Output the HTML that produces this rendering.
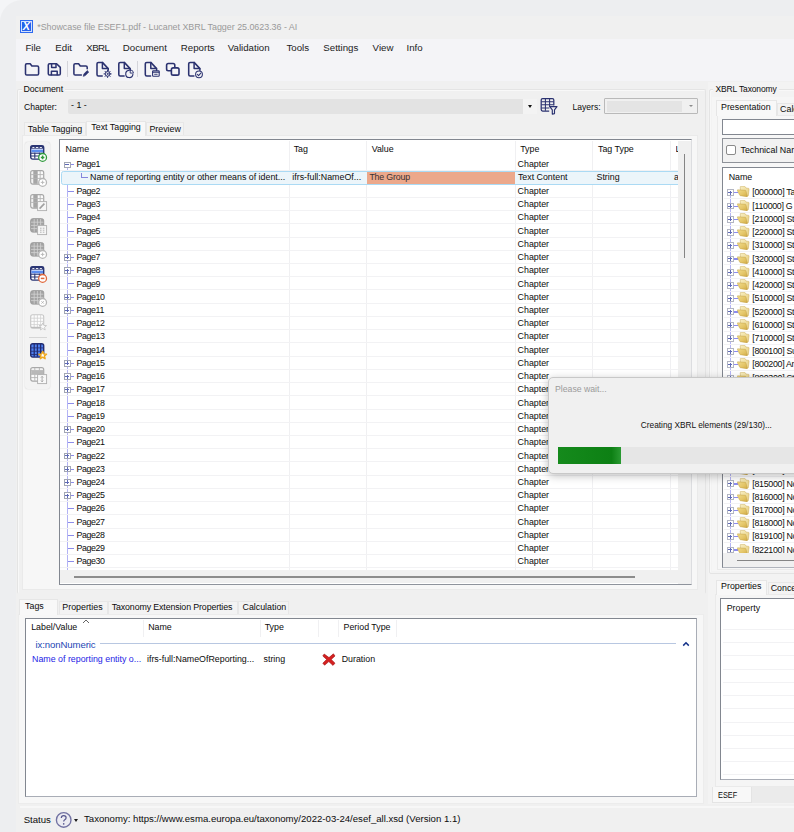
<!DOCTYPE html>
<html lang="en">
<head>
<meta charset="utf-8">
<title>Lucanet XBRL Tagger</title>
<style>
*{box-sizing:border-box;margin:0;padding:0}
html,body{width:794px;height:832px;overflow:hidden}
body{background:#f4f5f7;font-family:"Liberation Sans",sans-serif;font-size:8.85px;color:#0c0c0c;position:relative}
i{font-style:normal;display:block;position:absolute}
.abs{position:absolute}
#frame{position:absolute;left:0;top:0;width:900px;height:900px;background:#edeef0;border-top-left-radius:22px}
#win{position:absolute;left:16px;top:16px;width:800px;height:830px;background:#f0f0f0}
#title{position:absolute;left:0;top:0;width:100%;height:22.5px;background:#f0f0f0}
#title span{position:absolute;left:21.2px;top:5.8px;font-size:8.93px;color:#9a9a9a;white-space:nowrap;letter-spacing:-0.03px}
#appicon{position:absolute;left:3.9px;top:3.9px;width:13.1px;height:13.1px;background:#2563eb;border:1px solid #2d6af0;box-shadow:inset 0 0 0 1px rgba(255,255,255,.8);color:#fff;font-size:10.8px;font-style:italic;font-weight:bold;line-height:11.4px;text-align:center}
#menu{position:absolute;left:0;top:22.5px;width:100%;height:42.8px;background:#f4f4f7}
#menu span{position:absolute;top:3.5px;font-size:9.7px;color:#222;white-space:nowrap}
.tb{position:absolute;top:46px;height:14px}
.tsep{position:absolute;top:45px;width:1px;height:16px;background:#d4d4da}
.lbl{position:absolute;white-space:nowrap;line-height:11px}
.gb{position:absolute;border:1px solid #e4e4e4;border-radius:2px;box-shadow:inset 1px 1px 0 #f8f8f8}
.tab{position:absolute;background:#f3f3f3;border:1px solid #e7e7e7;border-bottom:none;white-space:nowrap;line-height:11px}
.tab.on{background:#f8f8f8;border-color:#e6e6e6}
.page{position:absolute;background:#f7f7f7;border:1px solid #eaeaea}
/* main grid */
#grid{position:absolute;left:59px;top:139.3px;width:632.9px;height:445.9px;background:#fff;border:1px solid #828790;border-right-color:#dcdde0;border-bottom-color:#8e939c;overflow:hidden}
.row{position:absolute;left:60px;width:618px;height:13.23px;border-bottom:1px solid #f2f2f4}
.row .c,.hdr{position:absolute;top:1.3px;white-space:nowrap;line-height:11px}
.row.sel{background:#ecf5fa;border:1px solid #abdaf4;border-radius:2.5px;left:60.5px;width:626px;height:13.7px;margin-top:-0.4px}
.row.sel .c{top:0.4px}
.pg{letter-spacing:-0.42px}
.val{position:absolute;left:305.6px;top:0.1px;width:148.3px;height:12px;background:#eca88b;display:block}
.vline{position:absolute;width:1px;background:#f0f0f2}
.box{left:4px;top:3.4px;width:6.6px;height:6.6px;border:1px solid #a2a6b4;background:#fff}
.box:before{content:"";position:absolute;left:0.3px;top:1.8px;width:4px;height:1px;background:#5f6ab6}
.box.plus:after{content:"";position:absolute;left:1.8px;top:0.3px;width:1px;height:4px;background:#5f6ab6}
.dash{left:7.5px;top:6.2px;width:6.5px;height:1px;background:#8d8dea}
.dash.d2{left:10.5px;width:3.5px}
.ell{left:19.3px;top:0.6px;width:7px;height:5px;border-left:1px solid #8585dc;border-bottom:1px solid #8585dc}
/* tax tree */
.trow{position:absolute;left:723.6px;width:80px;height:13.23px;border-bottom:1px solid #f2f2f4}
.trow span{position:absolute;left:28.7px;top:1.4px;white-space:nowrap;line-height:11px;letter-spacing:-0.3px}
.tbox{left:3.4px;top:3.3px;width:6.8px;height:6.8px;border:1px solid #b2b5c2;background:#fff}
.tbox:before{content:"";position:absolute;left:0.4px;top:1.9px;width:4px;height:1px;background:#5f6ab6}
.tbox:after{content:"";position:absolute;left:1.9px;top:0.4px;width:1px;height:4px;background:#5f6ab6}
.tdash{left:10.2px;top:6.2px;width:4px;height:1.2px;background:#8c8cf0}
.fold{position:absolute;left:13.8px;top:0.4px;width:12.4px;height:11px}
.pline{left:722.5px;width:80px;height:1px;background:#f2f2f4}
.ico{position:absolute;left:29.5px;width:20px;height:20px;overflow:visible}
</style>
</head>
<body>
<svg width="0" height="0" style="position:absolute">
<defs>
<g id="folder">
<path d="M3.2 0.9 Q3.3 0.4 3.9 0.4 L7.4 0.3 Q7.9 0.3 8.2 0.8 L9 2 L11.6 2.4 Q12.2 2.5 12.1 3.1 L11.3 9.8 L9.8 10.3 L3.6 6 Z" fill="url(#fgb)" stroke="#c4a24a" stroke-width="0.45"/>
<path d="M0.3 4.4 Q0.1 3.8 0.8 3.8 L8.2 4.3 Q8.8 4.4 8.9 4.9 L10.3 10.2 Q10.4 10.8 9.8 10.7 L3.4 9.7 Q2.9 9.6 2.7 9.1 Z" fill="url(#fgf)" stroke="#bf9a3c" stroke-width="0.45"/>
</g>
<linearGradient id="fgb" x1="0" y1="0" x2="1" y2="1"><stop offset="0" stop-color="#f8efc4"/><stop offset="1" stop-color="#e6cd7c"/></linearGradient>
<linearGradient id="fgf" x1="0" y1="0" x2="1" y2="1"><stop offset="0" stop-color="#f1dc8c"/><stop offset="0.6" stop-color="#e3c466"/><stop offset="1" stop-color="#cfa944"/></linearGradient>
<g id="tblnavy">
<rect x="0.7" y="0.7" width="13" height="13.4" rx="2" fill="#fff" stroke="#2b3674" stroke-width="1.4"/>
<rect x="0.7" y="0.7" width="13" height="3" fill="#2b3674"/>
<rect x="1.4" y="4.6" width="11.6" height="2.8" fill="#5b8def"/>
<path d="M1 8.2H13.4M1 11H13.4M4.8 7.6V13.6M9.4 7.6V13.6" stroke="#2b3674" stroke-width="1.1" fill="none"/>
<path d="M2.4 2.5H4.4M5.9 2.5H8.3M9.8 2.5H11.9" stroke="#fff" stroke-width="0.9"/>
</g>
<g id="tblgray">
<rect x="0.7" y="0.7" width="13" height="13.4" rx="2" fill="#a3a3a3" stroke="#9a9a9a" stroke-width="1"/>
<path d="M1 4.2H13.4M1 7.4H13.4M1 10.6H13.4M4.2 1V13.8M7.4 1V13.8M10.6 1V13.8" stroke="#d2d2d2" stroke-width="0.8" fill="none"/>
</g>
<g id="tblcol">
<rect x="0.7" y="0.7" width="13" height="13.4" rx="2" fill="#fafafa" stroke="#a8a8a8" stroke-width="1.2"/>
<rect x="3.6" y="1" width="3.6" height="12.8" fill="#a6a6a6"/>
<path d="M1 4.6H13.4M1 8.4H13.4M10.2 1V13.8M3.4 1V13.8M7.4 1V13.8" stroke="#b4b4b4" stroke-width="0.9" fill="none"/>
</g>
<g id="tbllight">
<rect x="0.7" y="0.7" width="13" height="13.4" rx="2" fill="#fdfdfd" stroke="#c6c6c6" stroke-width="1.1"/>
<path d="M1 4.2H13.4M1 7.4H13.4M1 10.6H13.4M4.2 1V13.8M7.4 1V13.8M10.6 1V13.8" stroke="#d0d0d0" stroke-width="0.8" fill="none"/>
<path d="M1 13.4H13.4" stroke="#bdbdbd" stroke-width="1.2"/>
</g>
<g id="tblblue">
<rect x="0.7" y="0.7" width="13" height="13.4" rx="2" fill="#4f80f0" stroke="#232c70" stroke-width="1.4"/>
<path d="M4.2 1V13.8M7.4 1V13.8M10.6 1V13.8" stroke="#232c70" stroke-width="1.3" fill="none"/><path d="M1 4.9H13.4M1 8.3H13.4M1 11.5H13.4" stroke="#232c70" stroke-width="0.8" fill="none"/>
</g>
<g id="tblrows">
<rect x="0.7" y="0.7" width="13" height="13.4" rx="2" fill="#fafafa" stroke="#a8a8a8" stroke-width="1.2"/>
<rect x="1.2" y="3.6" width="12" height="3.6" fill="#b8b8b8"/>
<path d="M1 3.4H13.4M1 7.4H13.4M1 10.6H13.4M4.8 7.4V13.8M9.4 7.4V13.8M4.8 1V3.2M9.4 1V3.2" stroke="#b4b4b4" stroke-width="0.9" fill="none"/>
</g>
</defs>
</svg>
<div id="frame"></div>
<div id="win">
  <div id="title"><div id="appicon">X</div><span>*Showcase file ESEF1.pdf - Lucanet XBRL Tagger 25.0623.36 - AI</span></div>
  <div id="menu">
    <span style="left:9.4px">File</span><span style="left:39.3px">Edit</span><span style="left:70.3px;letter-spacing:-0.55px">XBRL</span><span style="left:106.8px">Document</span><span style="left:164.8px">Reports</span><span style="left:211.8px">Validation</span><span style="left:270.5px">Tools</span><span style="left:307.3px">Settings</span><span style="left:356.6px">View</span><span style="left:390.5px">Info</span>
  </div>
</div>
<!-- toolbar icons (abs coords) -->
<svg class="abs" style="left:0;top:0" width="260" height="90" viewBox="0 0 260 90" fill="none" stroke="#2b3270" stroke-width="1.55" stroke-linejoin="round" stroke-linecap="round">
<path d="M25.5 64.9 Q25.5 63.7 26.7 63.7 H30.2 L31.9 66 H37.3 Q38.6 66 38.6 67.3 V73.7 Q38.6 75 37.3 75 H26.8 Q25.5 75 25.5 73.7 Z"/>
<path d="M48.3 65 Q48.3 63.7 49.6 63.7 H56.6 L60.3 67.4 V73.7 Q60.3 75 59 75 H49.6 Q48.3 75 48.3 73.7 Z"/>
<path d="M51.6 64 V67.5 H56 V64 M51.4 74.8 V71.2 H57.2 V74.8" stroke-width="1.5"/>
<path d="M81.4 75 H75.2 Q73.9 75 73.9 73.7 V65 Q73.9 63.7 75.2 63.7 H78.6 L80.3 66 H85.9 Q87.2 66 87.2 67.3 V68.8"/>
<path d="M83.4 76 L83.9 74 L87.2 70.6 L88.7 72 L85.4 75.4 Z" fill="#2b3270" stroke-width="0.7"/>
<path d="M102.2 76.0 H98.4 Q97.0 76.0 97.0 74.6 V63.8 Q97.0 62.4 98.4 62.4 H102.4 L108.2 68.6 V70.2"/><path d="M102.4 62.6 V68.6 H108.0" stroke-width="1.5"/>
<circle cx="107.6" cy="73.9" r="2.4" stroke-width="1"/><circle cx="107.6" cy="73.9" r="0.7" fill="#2b3270" stroke-width="0.5"/>
<path d="M107.6 70.3V71.2M107.6 76.6V77.5M104 73.9H104.9M110.3 73.9H111.2M105.1 71.4L105.7 72M109.5 75.8L110.1 76.4M105.1 76.4L105.7 75.8M109.5 72L110.1 71.4" stroke-width="1"/>
<path d="M124.1 76.0 H120.2 Q118.8 76.0 118.8 74.6 V63.8 Q118.8 62.4 120.2 62.4 H124.3 L130.1 68.6 V70.2"/><path d="M124.3 62.6 V68.6 H129.9" stroke-width="1.5"/>
<path d="M128.9 70.4 A3.6 3.6 0 1 0 132.9 74.4" stroke-width="1.1"/><path d="M130.2 69.8 V73.1 H133.5 A3.4 3.4 0 0 0 130.2 69.8Z" stroke-width="0.9"/>
<path d="M150.6 76.0 H146.8 Q145.3 76.0 145.3 74.6 V63.8 Q145.3 62.4 146.8 62.4 H150.8 L156.6 68.6 V70.2"/><path d="M150.8 62.6 V68.6 H156.4" stroke-width="1.5"/>
<rect x="152.6" y="70.7" width="6.6" height="5.6" rx="0.8" stroke-width="1.1"/><path d="M152.8 72.2H159" stroke-width="1.3"/><path d="M154.6 74.3H157.2" stroke-width="0.9"/>
<rect x="166.6" y="63.5" width="8.2" height="7.2" rx="1.7" stroke-width="1.6"/>
<rect x="171.4" y="67.9" width="7.6" height="7.2" rx="1.7" stroke-width="1.6" fill="#f4f4f7"/>
<path d="M193.9 76.0 H190.1 Q188.7 76.0 188.7 74.6 V63.8 Q188.7 62.4 190.1 62.4 H194.1 L199.9 68.6 V70.2"/><path d="M194.1 62.6 V68.6 H199.7" stroke-width="1.5"/>
<circle cx="199" cy="74.3" r="3.4" stroke-width="1.05"/><path d="M197.3 74.4 L198.6 75.6 L200.8 73.1" stroke-width="1.05"/>
</svg>
<i class="tsep" style="left:67.1px;top:61.3px"></i><i class="tsep" style="left:137.2px;top:61.3px"></i>

<!-- Document groupbox -->
<div class="gb" style="left:16.5px;top:89.3px;width:689px;height:505px;border-bottom-color:transparent"></div>
<span class="lbl" style="left:21.5px;top:83.5px;background:#f0f0f0;padding:0 2px;letter-spacing:-0.1px">Document</span>
<span class="lbl" style="left:24px;top:101.7px;font-size:8.6px">Chapter:</span>
<div class="abs" style="left:67.7px;top:98.7px;width:469.6px;height:15.2px;background:#e3e3e3;border-radius:2px"></div>
<div class="abs" style="left:522.7px;top:98.7px;width:14.6px;height:15.2px;background:#f3f3f3"></div>
<i style="left:528.3px;top:104.8px;border:2.4px solid transparent;border-top:3px solid #111;width:0;height:0"></i>
<span class="lbl" style="left:71px;top:99.5px">- 1 -</span>
<!-- filter icon -->
<svg class="abs" style="left:539.4px;top:96.2px" width="20" height="20" viewBox="0 0 20 20" fill="none" stroke="#2b3270" stroke-width="1.25" stroke-linejoin="round">
  <path d="M10.2 15 H3.6 Q2.2 15 2.2 13.6 V4 Q2.2 2.6 3.6 2.6 H13.4 Q14.8 2.6 14.8 4 V9.6"/>
  <path d="M2.4 5.7H14.6M2.4 8.8H14.6M2.4 11.9H10.4M6.4 2.8V14.8M10.6 2.8V11" stroke-width="1.05"/>
  <path d="M10.8 10.6 H18 L15.5 13.8 V17.6 L13.3 18.2 V13.8 Z" fill="#f0f0f0" stroke-width="1.15"/>
</svg>
<span class="lbl" style="left:572.5px;top:102.1px;font-size:8.55px">Layers:</span>
<div class="abs" style="left:604.2px;top:98.2px;width:94px;height:16.2px;border:1px solid #b9b9b9;background:#f0f0f0;border-radius:1px"></div>
<div class="abs" style="left:606.5px;top:100.5px;width:75.2px;height:11.6px;background:#e4e4e4"></div>
<i style="left:688.6px;top:105.2px;border:2.4px solid transparent;border-top:2.6px solid #8c8c8c;width:0;height:0"></i>

<!-- tabs -->
<div class="page" style="left:22.2px;top:135.3px;width:675.8px;height:455px"></div>
<div class="tab" style="left:24px;top:121.9px;width:61.5px;height:13.6px;padding:1.1px 0 0 2.8px">Table Tagging</div>
<div class="tab" style="left:146px;top:121.9px;width:37.5px;height:13.6px;padding:1.1px 0 0 2.4px">Preview</div>
<div class="tab on" style="left:85.5px;top:120.7px;width:60.5px;height:15.6px;padding:0.3px 0 0 4.8px">Text Tagging</div>

<!-- side tool panel -->
<div class="abs" style="left:24.6px;top:142.4px;width:25px;height:246.4px;background:#f3f3f3;border-radius:3px;box-shadow:0 0 1.5px rgba(0,0,0,.18)"></div>
<svg class="ico" style="top:145.2px" viewBox="0 0 20 20"><use href="#tblnavy"/><circle cx="12.6" cy="12.4" r="3.9" fill="#fff" stroke="#2f9a3c" stroke-width="1.3"/><path d="M12.6 10.6V14.2M10.8 12.4H14.4" stroke="#2f9a3c" stroke-width="1.5"/></svg>
<svg class="ico" style="top:169.9px" viewBox="0 0 20 20"><use href="#tblcol"/><circle cx="12.6" cy="12.4" r="3.9" fill="#fff" stroke="#b5b5b5" stroke-width="1.3"/><path d="M12.6 10.6V14.2M10.8 12.4H14.4" stroke="#b5b5b5" stroke-width="0.9"/></svg>
<svg class="ico" style="top:193.9px" viewBox="0 0 20 20"><use href="#tblcol"/><rect x="7.6" y="7.6" width="9" height="9" fill="#f6f6f6" stroke="#b0b0b0" stroke-width="0.9"/><path d="M9.6 14.6 L14.4 9.6" stroke="#a0a0a0" stroke-width="1.6"/></svg>
<svg class="ico" style="top:218.2px" viewBox="0 0 20 20"><use href="#tblgray"/><rect x="7.6" y="7.6" width="9" height="9" fill="#f6f6f6" stroke="#b0b0b0" stroke-width="0.9"/><path d="M10 10.2H11.6M12.8 10.2H14.4M10 12.2H11.6M12.8 12.2H14.4M10 14.2H11.6M12.8 14.2H14.4" stroke="#b4b4b4" stroke-width="1"/></svg>
<svg class="ico" style="top:241.9px" viewBox="0 0 20 20"><use href="#tblgray"/><circle cx="12.6" cy="12.4" r="3.9" fill="#fff" stroke="#b5b5b5" stroke-width="1.3"/><path d="M12.6 10.6V14.2M10.8 12.4H14.4" stroke="#b5b5b5" stroke-width="0.9"/></svg>
<svg class="ico" style="top:265.9px" viewBox="0 0 20 20"><use href="#tblnavy"/><circle cx="12.6" cy="12.4" r="3.9" fill="#fff" stroke="#e0673a" stroke-width="1.3"/><path d="M10.8 12.4H14.4" stroke="#e0673a" stroke-width="1.5"/></svg>
<svg class="ico" style="top:290.2px" viewBox="0 0 20 20"><use href="#tblgray"/><circle cx="12.6" cy="12.4" r="3.9" fill="#fff" stroke="#b5b5b5" stroke-width="1.3"/><path d="M11.4 11.2L13.8 13.6M13.8 11.2L11.4 13.6" stroke="#b5b5b5" stroke-width="0.9"/></svg>
<svg class="ico" style="top:314.2px" viewBox="0 0 20 20"><use href="#tbllight"/><path transform="translate(12.8 12.6) scale(0.85) translate(-12.6 -12.4)" d="M12.6 8 L13.9 11 L17 11.2 L14.6 13.2 L15.4 16.4 L12.6 14.6 L9.8 16.4 L10.6 13.2 L8.2 11.2 L11.3 11 Z" fill="#fafafa" stroke="#c4c4c4" stroke-width="1"/></svg>
<svg class="ico" style="top:343.0px" viewBox="0 0 20 20"><use href="#tblblue"/><path transform="translate(12.7 12.2) scale(0.8) translate(-12.6 -12.4)" d="M12.6 7.6 L14 10.8 L17.4 11.1 L14.8 13.3 L15.6 16.8 L12.6 14.9 L9.6 16.8 L10.4 13.3 L7.8 11.1 L11.2 10.8 Z" fill="#fff" stroke="#f0a81c" stroke-width="1.8" stroke-linejoin="round"/></svg>
<svg class="ico" style="top:367.2px" viewBox="0 0 20 20"><use href="#tblrows"/><rect x="7.6" y="7.6" width="9" height="9" fill="#f8f8f8" stroke="#b0b0b0" stroke-width="0.9"/><path d="M12.1 9.4V14.8M10.9 10.6L12.1 9.4L13.3 10.6M10.9 13.6L12.1 14.8L13.3 13.6" stroke="#9a9a9a" stroke-width="0.8" fill="none"/></svg>
<i style="left:29px;top:337.4px;width:18px;height:1px;background:#d6d6d6"></i>

<!-- grid -->
<div id="grid"></div>
<span class="hdr" style="left:65.5px;top:143.9px">Name</span><span class="hdr" style="left:293.7px;top:143.9px">Tag</span><span class="hdr" style="left:371.7px;top:143.9px">Value</span><span class="hdr" style="left:520.2px;top:143.9px">Type</span><span class="hdr" style="left:598px;top:143.9px">Tag Type</span><span class="hdr" style="left:675.5px;top:143.9px;width:3px;overflow:hidden">L</span>
<i class="vline" style="left:288.5px;top:141px;height:429px"></i><i class="vline" style="left:366px;top:141px;height:429px"></i><i class="vline" style="left:514.5px;top:141px;height:429px"></i><i class="vline" style="left:592px;top:141px;height:429px"></i><i class="vline" style="left:670px;top:141px;height:429px"></i>
<i style="left:67.3px;top:168px;width:1px;height:402px;background:#b4b4f5"></i>
<div class="row" style="top:158.20px"><i class="box minus"></i><i class="dash d2"></i><span class="c pg" style="left:16.6px">Page1</span><span class="c" style="left:457.6px">Chapter</span></div>
<div class="row sel" style="top:171.43px"><i class="ell"></i><span class="c" style="left:28.5px">Name of reporting entity or other means of ident...</span><span class="c" style="left:230.8px">ifrs-full:NameOf...</span><b class="val"></b><span class="c" style="left:307.9px;letter-spacing:-0.2px;color:#3a3232">The Group</span><span class="c" style="left:456.4px">Text Content</span><span class="c" style="left:535px">String</span><span class="c" style="left:612.5px">a</span></div>
<div class="row" style="top:184.66px"><i class="dash"></i><span class="c pg" style="left:16.6px">Page2</span><span class="c" style="left:457.6px">Chapter</span></div>
<div class="row" style="top:197.89px"><i class="dash"></i><span class="c pg" style="left:16.6px">Page3</span><span class="c" style="left:457.6px">Chapter</span></div>
<div class="row" style="top:211.12px"><i class="dash"></i><span class="c pg" style="left:16.6px">Page4</span><span class="c" style="left:457.6px">Chapter</span></div>
<div class="row" style="top:224.35px"><i class="dash"></i><span class="c pg" style="left:16.6px">Page5</span><span class="c" style="left:457.6px">Chapter</span></div>
<div class="row" style="top:237.58px"><i class="dash"></i><span class="c pg" style="left:16.6px">Page6</span><span class="c" style="left:457.6px">Chapter</span></div>
<div class="row" style="top:250.81px"><i class="box plus"></i><i class="dash d2"></i><span class="c pg" style="left:16.6px">Page7</span><span class="c" style="left:457.6px">Chapter</span></div>
<div class="row" style="top:264.04px"><i class="box plus"></i><i class="dash d2"></i><span class="c pg" style="left:16.6px">Page8</span><span class="c" style="left:457.6px">Chapter</span></div>
<div class="row" style="top:277.27px"><i class="dash"></i><span class="c pg" style="left:16.6px">Page9</span><span class="c" style="left:457.6px">Chapter</span></div>
<div class="row" style="top:290.50px"><i class="box plus"></i><i class="dash d2"></i><span class="c pg" style="left:16.6px">Page10</span><span class="c" style="left:457.6px">Chapter</span></div>
<div class="row" style="top:303.73px"><i class="box plus"></i><i class="dash d2"></i><span class="c pg" style="left:16.6px">Page11</span><span class="c" style="left:457.6px">Chapter</span></div>
<div class="row" style="top:316.96px"><i class="dash"></i><span class="c pg" style="left:16.6px">Page12</span><span class="c" style="left:457.6px">Chapter</span></div>
<div class="row" style="top:330.19px"><i class="dash"></i><span class="c pg" style="left:16.6px">Page13</span><span class="c" style="left:457.6px">Chapter</span></div>
<div class="row" style="top:343.42px"><i class="dash"></i><span class="c pg" style="left:16.6px">Page14</span><span class="c" style="left:457.6px">Chapter</span></div>
<div class="row" style="top:356.65px"><i class="box plus"></i><i class="dash d2"></i><span class="c pg" style="left:16.6px">Page15</span><span class="c" style="left:457.6px">Chapter</span></div>
<div class="row" style="top:369.88px"><i class="box plus"></i><i class="dash d2"></i><span class="c pg" style="left:16.6px">Page16</span><span class="c" style="left:457.6px">Chapter</span></div>
<div class="row" style="top:383.11px"><i class="box plus"></i><i class="dash d2"></i><span class="c pg" style="left:16.6px">Page17</span><span class="c" style="left:457.6px">Chapter</span></div>
<div class="row" style="top:396.34px"><i class="dash"></i><span class="c pg" style="left:16.6px">Page18</span><span class="c" style="left:457.6px">Chapter</span></div>
<div class="row" style="top:409.57px"><i class="dash"></i><span class="c pg" style="left:16.6px">Page19</span><span class="c" style="left:457.6px">Chapter</span></div>
<div class="row" style="top:422.80px"><i class="box plus"></i><i class="dash d2"></i><span class="c pg" style="left:16.6px">Page20</span><span class="c" style="left:457.6px">Chapter</span></div>
<div class="row" style="top:436.03px"><i class="dash"></i><span class="c pg" style="left:16.6px">Page21</span><span class="c" style="left:457.6px">Chapter</span></div>
<div class="row" style="top:449.26px"><i class="box plus"></i><i class="dash d2"></i><span class="c pg" style="left:16.6px">Page22</span><span class="c" style="left:457.6px">Chapter</span></div>
<div class="row" style="top:462.49px"><i class="box plus"></i><i class="dash d2"></i><span class="c pg" style="left:16.6px">Page23</span><span class="c" style="left:457.6px">Chapter</span></div>
<div class="row" style="top:475.72px"><i class="box plus"></i><i class="dash d2"></i><span class="c pg" style="left:16.6px">Page24</span><span class="c" style="left:457.6px">Chapter</span></div>
<div class="row" style="top:488.95px"><i class="box plus"></i><i class="dash d2"></i><span class="c pg" style="left:16.6px">Page25</span><span class="c" style="left:457.6px">Chapter</span></div>
<div class="row" style="top:502.18px"><i class="dash"></i><span class="c pg" style="left:16.6px">Page26</span><span class="c" style="left:457.6px">Chapter</span></div>
<div class="row" style="top:515.41px"><i class="dash"></i><span class="c pg" style="left:16.6px">Page27</span><span class="c" style="left:457.6px">Chapter</span></div>
<div class="row" style="top:528.64px"><i class="dash"></i><span class="c pg" style="left:16.6px">Page28</span><span class="c" style="left:457.6px">Chapter</span></div>
<div class="row" style="top:541.87px"><i class="dash"></i><span class="c pg" style="left:16.6px">Page29</span><span class="c" style="left:457.6px">Chapter</span></div>
<div class="row" style="top:555.10px"><i class="dash"></i><span class="c pg" style="left:16.6px">Page30</span><span class="c" style="left:457.6px">Chapter</span></div>
<!-- scrollbars -->
<div class="abs" style="left:678px;top:140.5px;width:12.7px;height:443.5px;background:#f0f0f0"></div>
<div class="abs" style="left:60px;top:570.3px;width:630.7px;height:13.2px;background:#f0f0f0"></div>
<i style="left:683.7px;top:154px;width:1.3px;height:104px;background:#858585"></i>
<i style="left:74.3px;top:576.4px;width:561px;height:1.2px;background:#8c8c8c"></i>

<!-- bottom tabs -->
<div class="abs" style="left:18.2px;top:614px;width:686.3px;height:189.5px;background:#f7f7f7;border:1px solid #ececec"></div>
<div class="tab" style="left:58.5px;top:600.7px;width:49px;height:13.6px;padding:0.6px 0 0 2.8px">Properties</div>
<div class="tab" style="left:107.5px;top:600.7px;width:130px;height:13.6px;padding:0.6px 0 0 3.2px;letter-spacing:-0.13px">Taxonomy Extension Properties</div>
<div class="tab" style="left:238px;top:600.7px;width:50.5px;height:13.6px;padding:0.6px 0 0 3.5px">Calculation</div>
<div class="tab on" style="left:19.1px;top:598.8px;width:39.4px;height:16.4px;padding:0.8px 0 0 5px">Tags</div>
<div class="abs" style="left:24.5px;top:618px;width:672.8px;height:179.3px;background:#fff;border:1px solid #828790;border-right-color:#a9adb6;border-bottom-color:#a9adb6"></div>
<span class="lbl" style="left:31.2px;top:622.1px">Label/Value</span><span class="lbl" style="left:148.2px;top:622.1px">Name</span><span class="lbl" style="left:264.7px;top:622.1px">Type</span><span class="lbl" style="left:343.5px;top:622.1px">Period Type</span>
<svg class="abs" style="left:82px;top:618.5px" width="8" height="5" viewBox="0 0 8 5"><path d="M1 4 L4 1 L7 4" stroke="#555" stroke-width="0.9" fill="none"/></svg>
<i class="vline" style="left:143px;top:619.5px;height:17px"></i><i class="vline" style="left:259.7px;top:619.5px;height:17px"></i><i class="vline" style="left:318px;top:619.5px;height:17px"></i><i class="vline" style="left:338px;top:619.5px;height:17px"></i><i class="vline" style="left:395.5px;top:619.5px;height:17px"></i>
<span class="lbl" style="left:35.5px;top:638.9px;color:#2446b4;font-size:9.6px;letter-spacing:-0.1px">ix:nonNumeric</span>
<i style="left:100px;top:642.8px;width:576px;height:1px;background:#b8c7e1"></i>
<svg class="abs" style="left:682px;top:641px" width="8" height="6" viewBox="0 0 8 6"><path d="M1.2 4.6 L4 1.8 L6.8 4.6" stroke="#15338a" stroke-width="1.5" fill="none"/></svg>
<span class="lbl" style="left:32px;top:653.9px;color:#2424e6">Name of reporting entity o...</span>
<span class="lbl" style="left:147px;top:653.9px">ifrs-full:NameOfReporting...</span>
<span class="lbl" style="left:263.5px;top:653.9px">string</span>
<span class="lbl" style="left:341.7px;top:653.9px">Duration</span>
<svg class="abs" style="left:322px;top:652.5px" width="14" height="13" viewBox="0 0 14 13"><path d="M2.2 1 L7 4.6 L11.4 0.8 L13 3 L9.2 6.4 L13 10.2 L11 12.4 L6.8 8.6 L2.6 12.2 L0.8 10.2 L4.6 6.4 L0.8 3 Z" fill="#d42020" stroke="#a01010" stroke-width="0.6"/></svg>

<!-- splitter -->
<div class="abs" style="left:708.3px;top:81.5px;width:100px;height:722px;background:#f3f3f3"></div>

<!-- right: XBRL Taxonomy -->
<div class="gb" style="left:708.6px;top:89.3px;width:100px;height:485px"></div>
<div class="abs" style="left:711.7px;top:96.8px;width:100px;height:474px;background:#f6f6f6"></div>
<span class="lbl" style="left:713.4px;top:83.5px;background:#f3f3f3;padding:0 2px;font-size:8.5px;letter-spacing:-0.12px">XBRL Taxonomy</span>
<div class="page" style="left:716.7px;top:114.7px;width:90px;height:455px"></div>
<div class="tab" style="left:777px;top:102.5px;width:40px;height:12.6px;padding:0px 0 0 2.1px">Calc</div>
<div class="tab on" style="left:716.2px;top:100px;width:60.5px;height:15.7px;padding:0.6px 0 0 3.8px">Presentation</div>
<div class="abs" style="left:722.4px;top:119.2px;width:90px;height:15.4px;background:#fff;border:1px solid #828790"></div>
<div class="abs" style="left:722.4px;top:138.3px;width:90px;height:25px;background:#f2f2f2;border:1px solid #8e9299"></div>
<div class="abs" style="left:726px;top:145.4px;width:9.6px;height:9.4px;background:#fff;border:1px solid #8a8a8a;border-radius:2px"></div>
<span class="lbl" style="left:740.5px;top:144.8px">Technical Nar</span>
<div class="abs" style="left:722.4px;top:167.2px;width:90px;height:400.5px;background:#fff;border:1px solid #828790;border-bottom-color:#b0b4bc"></div>
<span class="lbl" style="left:728.7px;top:171.7px">Name</span>
<i style="left:730px;top:192px;width:1px;height:364px;background:#b4b4f5"></i>
<div class="trow" style="top:186.10px"><i class="tbox"></i><i class="tdash"></i><svg class="fold" viewBox="0 0 12.4 11"><use href="#folder"/></svg><span>[000000] Ta</span></div>
<div class="trow" style="top:199.33px"><i class="tbox"></i><i class="tdash"></i><svg class="fold" viewBox="0 0 12.4 11"><use href="#folder"/></svg><span>[110000] G</span></div>
<div class="trow" style="top:212.56px"><i class="tbox"></i><i class="tdash"></i><svg class="fold" viewBox="0 0 12.4 11"><use href="#folder"/></svg><span>[210000] St</span></div>
<div class="trow" style="top:225.79px"><i class="tbox"></i><i class="tdash"></i><svg class="fold" viewBox="0 0 12.4 11"><use href="#folder"/></svg><span>[220000] St</span></div>
<div class="trow" style="top:239.02px"><i class="tbox"></i><i class="tdash"></i><svg class="fold" viewBox="0 0 12.4 11"><use href="#folder"/></svg><span>[310000] St</span></div>
<div class="trow" style="top:252.25px"><i class="tbox"></i><i class="tdash"></i><svg class="fold" viewBox="0 0 12.4 11"><use href="#folder"/></svg><span>[320000] St</span></div>
<div class="trow" style="top:265.48px"><i class="tbox"></i><i class="tdash"></i><svg class="fold" viewBox="0 0 12.4 11"><use href="#folder"/></svg><span>[410000] St</span></div>
<div class="trow" style="top:278.71px"><i class="tbox"></i><i class="tdash"></i><svg class="fold" viewBox="0 0 12.4 11"><use href="#folder"/></svg><span>[420000] St</span></div>
<div class="trow" style="top:291.94px"><i class="tbox"></i><i class="tdash"></i><svg class="fold" viewBox="0 0 12.4 11"><use href="#folder"/></svg><span>[510000] St</span></div>
<div class="trow" style="top:305.17px"><i class="tbox"></i><i class="tdash"></i><svg class="fold" viewBox="0 0 12.4 11"><use href="#folder"/></svg><span>[520000] St</span></div>
<div class="trow" style="top:318.40px"><i class="tbox"></i><i class="tdash"></i><svg class="fold" viewBox="0 0 12.4 11"><use href="#folder"/></svg><span>[610000] St</span></div>
<div class="trow" style="top:331.63px"><i class="tbox"></i><i class="tdash"></i><svg class="fold" viewBox="0 0 12.4 11"><use href="#folder"/></svg><span>[710000] St</span></div>
<div class="trow" style="top:344.86px"><i class="tbox"></i><i class="tdash"></i><svg class="fold" viewBox="0 0 12.4 11"><use href="#folder"/></svg><span>[800100] Su</span></div>
<div class="trow" style="top:358.09px"><i class="tbox"></i><i class="tdash"></i><svg class="fold" viewBox="0 0 12.4 11"><use href="#folder"/></svg><span>[800200] An</span></div>
<div class="trow" style="top:371.32px"><i class="tbox"></i><i class="tdash"></i><svg class="fold" viewBox="0 0 12.4 11"><use href="#folder"/></svg><span>[800300] St</span></div>
<div class="trow" style="top:384.55px"><i class="tbox"></i><i class="tdash"></i><svg class="fold" viewBox="0 0 12.4 11"><use href="#folder"/></svg><span>[800400] St</span></div>
<div class="trow" style="top:397.78px"><i class="tbox"></i><i class="tdash"></i><svg class="fold" viewBox="0 0 12.4 11"><use href="#folder"/></svg><span>[800500] No</span></div>
<div class="trow" style="top:411.01px"><i class="tbox"></i><i class="tdash"></i><svg class="fold" viewBox="0 0 12.4 11"><use href="#folder"/></svg><span>[800600] No</span></div>
<div class="trow" style="top:424.24px"><i class="tbox"></i><i class="tdash"></i><svg class="fold" viewBox="0 0 12.4 11"><use href="#folder"/></svg><span>[810000] No</span></div>
<div class="trow" style="top:437.47px"><i class="tbox"></i><i class="tdash"></i><svg class="fold" viewBox="0 0 12.4 11"><use href="#folder"/></svg><span>[811000] No</span></div>
<div class="trow" style="top:450.70px"><i class="tbox"></i><i class="tdash"></i><svg class="fold" viewBox="0 0 12.4 11"><use href="#folder"/></svg><span>[813000] No</span></div>
<div class="trow" style="top:463.93px"><i class="tbox"></i><i class="tdash"></i><svg class="fold" viewBox="0 0 12.4 11"><use href="#folder"/></svg><span>[814000] No</span></div>
<div class="trow" style="top:477.16px"><i class="tbox"></i><i class="tdash"></i><svg class="fold" viewBox="0 0 12.4 11"><use href="#folder"/></svg><span>[815000] No</span></div>
<div class="trow" style="top:490.39px"><i class="tbox"></i><i class="tdash"></i><svg class="fold" viewBox="0 0 12.4 11"><use href="#folder"/></svg><span>[816000] No</span></div>
<div class="trow" style="top:503.62px"><i class="tbox"></i><i class="tdash"></i><svg class="fold" viewBox="0 0 12.4 11"><use href="#folder"/></svg><span>[817000] No</span></div>
<div class="trow" style="top:516.85px"><i class="tbox"></i><i class="tdash"></i><svg class="fold" viewBox="0 0 12.4 11"><use href="#folder"/></svg><span>[818000] No</span></div>
<div class="trow" style="top:530.08px"><i class="tbox"></i><i class="tdash"></i><svg class="fold" viewBox="0 0 12.4 11"><use href="#folder"/></svg><span>[819100] No</span></div>
<div class="trow" style="top:543.31px"><i class="tbox"></i><i class="tdash"></i><svg class="fold" viewBox="0 0 12.4 11"><use href="#folder"/></svg><span>[822100] No</span></div>
<div class="abs" style="left:723.4px;top:552.8px;width:80px;height:13.9px;background:#f0f0f0"></div>
<i style="left:736.5px;top:559.5px;width:70px;height:1.5px;background:#858585"></i>

<!-- right: properties -->
<div class="page" style="left:714.5px;top:593.5px;width:90px;height:193px;background:#f5f5f5"></div>
<div class="tab" style="left:767.5px;top:581.5px;width:40px;height:12.4px;padding:0px 0 0 2.2px">Conce</div>
<div class="tab on" style="left:715.8px;top:579.5px;width:51.6px;height:15px;padding:0.5px 0 0 4.3px">Properties</div>
<div class="abs" style="left:720.2px;top:598.2px;width:90px;height:181.6px;background:#fff;border:1px solid #828790;border-bottom-color:#a9adb6"></div>
<span class="lbl" style="left:726.7px;top:602.8px">Property</span>
<i class="pline" style="top:628.90px"></i>
<i class="pline" style="top:642.13px"></i>
<i class="pline" style="top:655.36px"></i>
<i class="pline" style="top:668.59px"></i>
<i class="pline" style="top:681.82px"></i>
<i class="pline" style="top:695.05px"></i>
<i class="pline" style="top:708.28px"></i>
<i class="pline" style="top:721.51px"></i>
<i class="pline" style="top:734.74px"></i>
<i class="pline" style="top:747.97px"></i>
<i class="pline" style="top:761.20px"></i>
<i class="pline" style="top:774.43px"></i>
<div class="abs" style="left:712px;top:786.7px;width:90px;height:16px;background:#ebebeb"></div>
<div class="abs" style="left:711.7px;top:786.7px;width:40px;height:16px;background:#f8f8f8;border:1px solid #e4e4e4;border-top:none"></div>
<span class="lbl" style="left:718.2px;top:790px;transform:scaleX(.83);transform-origin:0 0">ESEF</span>

<!-- status -->
<i style="left:19.5px;top:806.3px;width:780px;height:1.4px;background:#f7f7f7"></i>
<span class="lbl" style="left:23.7px;top:813.5px;font-size:9.6px">Status</span>
<svg class="abs" style="left:54px;top:810px" width="20" height="20" viewBox="0 0 20 20"><circle cx="9.7" cy="9.9" r="7.3" fill="#ececf2" stroke="#7272a2" stroke-width="1.35"/><path d="M7.3 8 Q7.3 5.6 9.7 5.6 Q12.1 5.6 12.1 7.8 Q12.1 9 10.8 9.7 Q9.7 10.3 9.7 11.6" fill="none" stroke="#55558c" stroke-width="1.2"/><circle cx="9.7" cy="13.9" r="0.8" fill="#55558c"/></svg>
<i style="left:73.6px;top:818.8px;border:2.8px solid transparent;border-top:3px solid #1a1a1a;width:0;height:0"></i>
<span class="lbl" style="left:84px;top:813.3px;font-size:9.6px">Taxonomy: https://www.esma.europa.eu/taxonomy/2022-03-24/esef_all.xsd (Version 1.1)</span>

<!-- dialog -->
<div class="abs" style="left:548.4px;top:377.2px;width:270px;height:96.8px;background:#f0f0f0;border:1px solid #c8c8c8;border-radius:5px;box-shadow:0 2px 9px rgba(0,0,0,.25)"></div>
<span class="lbl" style="left:555px;top:384.3px;color:#9b9b9b;font-size:8.7px">Please wait...</span>
<span class="lbl" style="left:640.8px;top:419.8px;font-size:8.3px;color:#111">Creating XBRL elements (29/130)...</span>
<div class="abs" style="left:558.2px;top:447px;width:250px;height:16.6px;background:#e6e6e6"></div>
<div class="abs" style="left:558.2px;top:447px;width:62.4px;height:16.6px;background:linear-gradient(90deg,#158a1c,#0d8014 85%,#2a9a32)"></div>
</body>
</html>
